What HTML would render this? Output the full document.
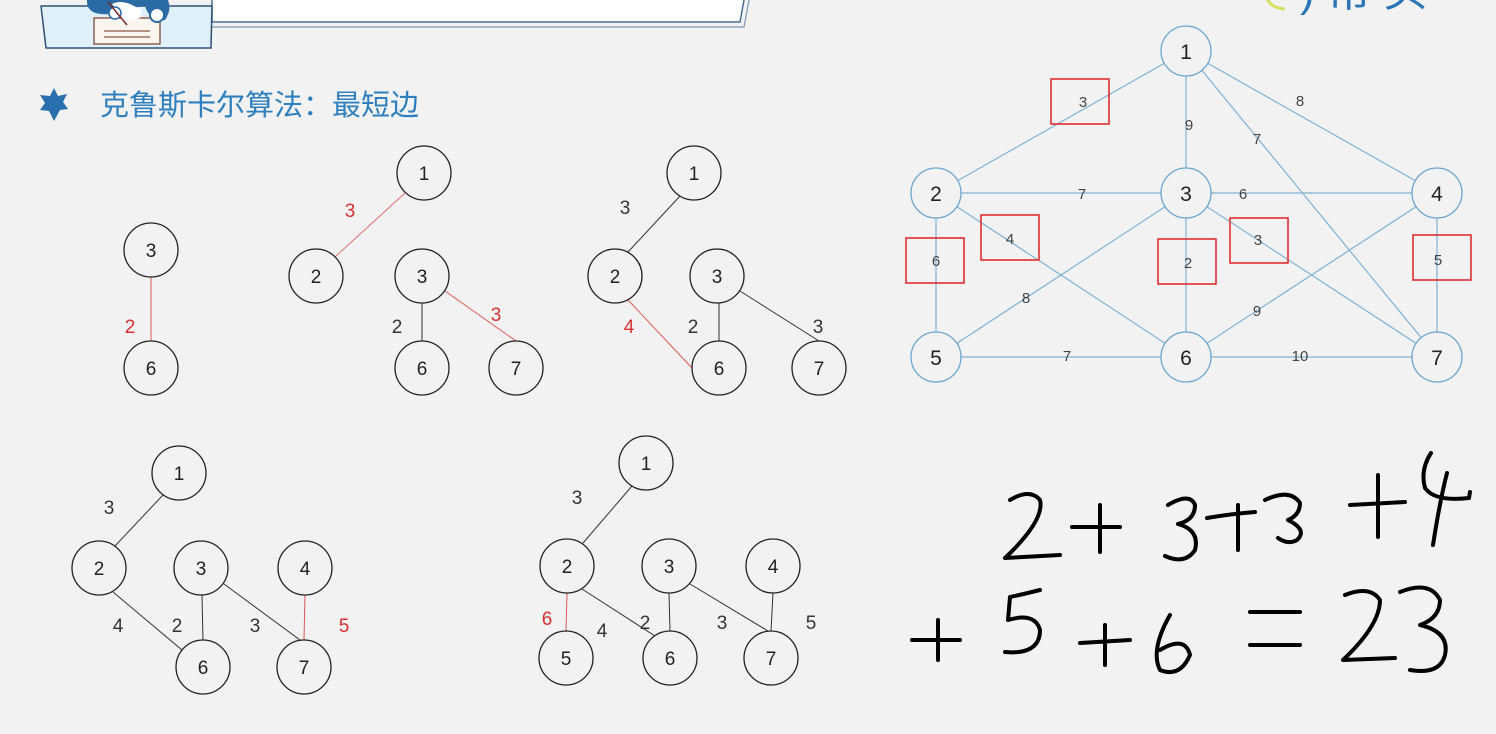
<!DOCTYPE html>
<html><head><meta charset="utf-8"><style>
html,body{margin:0;padding:0;background:#f2f2f2;}
svg{display:block}
text{font-family:"Liberation Sans","Noto Sans CJK SC",sans-serif;}
</style></head><body>
<svg width="1496" height="734" viewBox="0 0 1496 734" xmlns="http://www.w3.org/2000/svg">
<rect width="1496" height="734" fill="#f2f2f2"/>
<!-- banner -->
<path d="M212 0 V22 H740 L744 0" fill="#fff" stroke="#4a6f95" stroke-width="1.5"/>
<path d="M212 27 H744 L749 0" fill="none" stroke="#7a98b5" stroke-width="1.2"/>
<path d="M41 6 H212 L211 48 H46 Z" fill="#dff0fb" stroke="#2e5078" stroke-width="1.5"/>
<path d="M87 0 Q86 16 110 14 Q128 8 145 6 Q150 22 165 20 Q172 10 168 0 Z" fill="#2a6aa5"/>
<rect x="94" y="18" width="66" height="26" fill="#fbf5ef" stroke="#7a3a2a" stroke-width="1.2"/>
<path d="M112 4 Q120 0 130 4 L142 10 L140 18 L125 22 Z" fill="#fff"/>
<circle cx="115" cy="13" r="6" fill="#fff" stroke="#2a6aa5" stroke-width="1.5"/>
<circle cx="157" cy="15" r="7" fill="#fff" stroke="#2a6aa5" stroke-width="2"/>
<line x1="108" y1="2" x2="127" y2="25" stroke="#7a2a2a" stroke-width="1.5"/>
<line x1="104" y1="31" x2="150" y2="31" stroke="#a07060" stroke-width="1.5"/>
<line x1="104" y1="37" x2="150" y2="37" stroke="#a07060" stroke-width="1.5"/>
<!-- star + title -->
<polygon points="54,88 58,96 67,94 63,102 68,109 60,110 54,121 49,111 40,110 45,103 40,95 50,96" fill="#2a6fae"/>
<text x="100" y="115" font-size="29" fill="#2d7fbf">克鲁斯卡尔算法：最短边</text>
<path d="M1266 -6 Q1268 8 1285 9" fill="none" stroke="#d8e060" stroke-width="3"/>
<text x="1300" y="6" font-size="44" fill="#2a74b8">) 帮 头</text>

<g stroke-width="1" fill="none">
<line x1="151" y1="277" x2="151" y2="341" stroke="#e05555"/>
<line x1="405" y1="193" x2="335" y2="257" stroke="#e07070"/>
<line x1="422" y1="303" x2="422" y2="341" stroke="#333"/>
<line x1="445" y1="291" x2="516" y2="341" stroke="#e05555"/>
<line x1="680" y1="196" x2="628" y2="252" stroke="#333"/>
<line x1="628" y1="300" x2="692" y2="368" stroke="#e05555"/>
<line x1="719" y1="303" x2="719" y2="341" stroke="#333"/>
<line x1="740" y1="291" x2="819" y2="341" stroke="#333"/>
<line x1="163" y1="495" x2="115" y2="546" stroke="#333"/>
<line x1="113" y1="592" x2="182" y2="650" stroke="#333"/>
<line x1="202" y1="595" x2="203" y2="640" stroke="#333"/>
<line x1="224" y1="584" x2="300" y2="640" stroke="#333"/>
<line x1="305" y1="595" x2="304" y2="640" stroke="#e05555"/>
<line x1="632" y1="486" x2="583" y2="543" stroke="#333"/>
<line x1="567" y1="593" x2="566" y2="631" stroke="#e05555"/>
<line x1="582" y1="589" x2="655" y2="636" stroke="#333"/>
<line x1="669" y1="593" x2="670" y2="631" stroke="#333"/>
<line x1="690" y1="584" x2="768" y2="631" stroke="#333"/>
<line x1="773" y1="593" x2="771" y2="631" stroke="#333"/>
</g>
<g fill="#f2f2f2" stroke="#222" stroke-width="1.3">
<circle cx="151" cy="250" r="27"/><circle cx="151" cy="368" r="27"/>
<circle cx="424" cy="173" r="27"/><circle cx="316" cy="276" r="27"/><circle cx="422" cy="276" r="27"/><circle cx="422" cy="368" r="27"/><circle cx="516" cy="368" r="27"/>
<circle cx="694" cy="173" r="27"/><circle cx="615" cy="276" r="27"/><circle cx="717" cy="276" r="27"/><circle cx="719" cy="368" r="27"/><circle cx="819" cy="368" r="27"/>
<circle cx="179" cy="473" r="27"/><circle cx="99" cy="568" r="27"/><circle cx="201" cy="568" r="27"/><circle cx="305" cy="568" r="27"/><circle cx="203" cy="667" r="27"/><circle cx="304" cy="667" r="27"/>
<circle cx="646" cy="463" r="27"/><circle cx="567" cy="566" r="27"/><circle cx="669" cy="566" r="27"/><circle cx="773" cy="566" r="27"/><circle cx="566" cy="658" r="27"/><circle cx="670" cy="658" r="27"/><circle cx="771" cy="658" r="27"/>
</g>
<g font-size="19" fill="#222" text-anchor="middle">
<text x="151" y="257">3</text><text x="151" y="375">6</text>
<text x="424" y="180">1</text><text x="316" y="283">2</text><text x="422" y="283">3</text><text x="422" y="375">6</text><text x="516" y="375">7</text>
<text x="694" y="180">1</text><text x="615" y="283">2</text><text x="717" y="283">3</text><text x="719" y="375">6</text><text x="819" y="375">7</text>
<text x="179" y="480">1</text><text x="99" y="575">2</text><text x="201" y="575">3</text><text x="305" y="575">4</text><text x="203" y="674">6</text><text x="304" y="674">7</text>
<text x="646" y="470">1</text><text x="567" y="573">2</text><text x="669" y="573">3</text><text x="773" y="573">4</text><text x="566" y="665">5</text><text x="670" y="665">6</text><text x="771" y="665">7</text>
</g>
<g font-size="19" text-anchor="middle">
<text x="130" y="333" fill="#d83030">2</text>
<text x="350" y="217" fill="#d83030">3</text><text x="397" y="333" fill="#333">2</text><text x="496" y="321" fill="#d83030">3</text>
<text x="625" y="214" fill="#333">3</text><text x="629" y="333" fill="#d83030">4</text><text x="693" y="333" fill="#333">2</text><text x="818" y="333" fill="#333">3</text>
<text x="109" y="514" fill="#333">3</text><text x="118" y="632" fill="#333">4</text><text x="177" y="632" fill="#333">2</text><text x="255" y="632" fill="#333">3</text><text x="344" y="632" fill="#d83030">5</text>
<text x="577" y="504" fill="#333">3</text><text x="547" y="625" fill="#d83030">6</text><text x="602" y="637" fill="#333">4</text><text x="645" y="629" fill="#333">2</text><text x="722" y="629" fill="#333">3</text><text x="811" y="629" fill="#333">5</text>
</g>

<g stroke="#7fb2d6" stroke-width="1.2">
<line x1="1186" y1="51" x2="936" y2="193"/><line x1="1186" y1="51" x2="1186" y2="193"/>
<line x1="1186" y1="51" x2="1437" y2="357"/><line x1="1186" y1="51" x2="1437" y2="193"/>
<line x1="936" y1="193" x2="1437" y2="193"/><line x1="936" y1="193" x2="936" y2="357"/>
<line x1="936" y1="193" x2="1186" y2="357"/><line x1="1186" y1="193" x2="936" y2="357"/>
<line x1="1186" y1="193" x2="1186" y2="357"/><line x1="1186" y1="193" x2="1437" y2="357"/>
<line x1="1437" y1="193" x2="1437" y2="357"/><line x1="1437" y1="193" x2="1186" y2="357"/>
<line x1="936" y1="357" x2="1437" y2="357"/>
</g>
<g fill="#f2f2f2" stroke="#6aa5d0" stroke-width="1.3">
<circle cx="1186" cy="51" r="25"/><circle cx="936" cy="193" r="25"/><circle cx="1186" cy="193" r="25"/><circle cx="1437" cy="193" r="25"/>
<circle cx="936" cy="357" r="25"/><circle cx="1186" cy="357" r="25"/><circle cx="1437" cy="357" r="25"/>
</g>
<g font-size="21" fill="#222" text-anchor="middle">
<text x="1186" y="59">1</text><text x="936" y="201">2</text><text x="1186" y="201">3</text><text x="1437" y="201">4</text>
<text x="936" y="365">5</text><text x="1186" y="365">6</text><text x="1437" y="365">7</text>
</g>
<g fill="none" stroke="#e03030" stroke-width="1.6">
<rect x="1051" y="79" width="58" height="45"/><rect x="981" y="215" width="58" height="45"/>
<rect x="906" y="238" width="58" height="45"/><rect x="1158" y="239" width="58" height="45"/>
<rect x="1230" y="218" width="58" height="45"/><rect x="1413" y="235" width="58" height="45"/>
</g>
<g font-size="15" fill="#444" text-anchor="middle">
<text x="1083" y="107">3</text><text x="1189" y="130">9</text><text x="1257" y="144">7</text><text x="1300" y="106">8</text>
<text x="1082" y="199">7</text><text x="1243" y="199">6</text><text x="1010" y="244">4</text><text x="936" y="266">6</text>
<text x="1188" y="268">2</text><text x="1258" y="245">3</text><text x="1438" y="265">5</text>
<text x="1026" y="303">8</text><text x="1257" y="316">9</text><text x="1067" y="361">7</text><text x="1300" y="361">10</text>
</g>

<g fill="none" stroke="#000" stroke-width="4" stroke-linecap="round" stroke-linejoin="round">
<path d="M1010 500 Q1030 488 1040 500 Q1045 520 1005 558 L1060 555"/>
<path d="M1072 527 H1120 M1100 505 V552"/>
<path d="M1168 505 Q1190 492 1195 505 Q1195 520 1178 524 Q1200 530 1195 550 Q1185 565 1165 556"/>
<path d="M1207 518 Q1230 514 1255 512 M1238 505 V550"/>
<path d="M1265 500 Q1290 488 1300 503 Q1300 515 1288 520 Q1308 530 1297 540 Q1288 545 1278 538"/>
<path d="M1350 505 L1405 502 M1378 475 V537"/>
<path d="M1431 453 Q1420 470 1425 488 Q1435 502 1469 498 L1470 492 M1447 473 Q1440 500 1433 545"/>
<path d="M912 640 H960 M938 620 V660"/>
<path d="M1040 590 Q1020 595 1010 597 L1008 620 Q1035 612 1040 630 Q1040 655 1005 652"/>
<path d="M1080 643 L1130 640 M1105 625 V665"/>
<path d="M1170 615 Q1150 650 1160 670 Q1180 678 1190 655 Q1185 635 1160 650"/>
<path d="M1250 612 H1300 M1250 645 H1300"/>
<path d="M1345 595 Q1370 585 1380 600 Q1380 625 1343 660 L1395 658"/>
<path d="M1400 592 Q1430 580 1440 600 Q1440 618 1420 625 Q1450 632 1445 655 Q1440 675 1410 670"/>
</g>
</svg>
</body></html>
